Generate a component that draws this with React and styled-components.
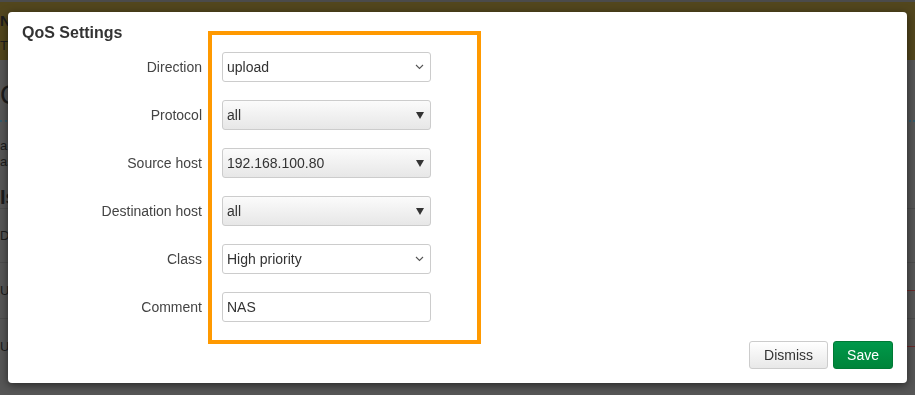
import React from 'react'
import styled, { createGlobalStyle } from 'styled-components'

const GlobalStyle = createGlobalStyle`
  html, body {
    margin: 0;
    padding: 0;
    background: #565656;
  }
  body {
    font-family: "Liberation Sans", Arial, sans-serif;
  }
`

// dimmed page behind the modal
const Page = styled.div`
  min-height: 395px;
  background: #565656;
  border-top: 2px solid #4b4b4b;
  color: #1c1c1c;
  overflow: hidden;
`
const Banner = styled.div`
  height: 58px;
  background: #52461d;
  padding: 11px 0 0 0;
  box-sizing: border-box;
`
const BannerTitle = styled.div`
  font-weight: bold;
  font-size: 15px;
  line-height: 16px;
`
const BannerText = styled.div`
  font-size: 13px;
  line-height: 14px;
  margin-top: 10px;
`
const PageHeading = styled.div`
  font-size: 28px;
  line-height: 30px;
  margin-top: 20px;
`
const Dotted = styled.div`
  border-top: 2px dotted #355a6a;
  margin-top: 10px;
`
const PageText = styled.div`
  font-size: 13px;
  line-height: 16px;
  margin-top: ${p => p.$top || 0}px;
`
const SubHeading = styled.div`
  font-size: 20px;
  font-weight: bold;
  line-height: 22px;
  margin-top: 16px;
`
const TableRow = styled.div`
  height: ${p => p.$h}px;
  border-top: 1px solid #4c4c4c;
  font-size: 13px;
  display: flex;
  align-items: center;
  justify-content: space-between;
`
const RedMark = styled.span`
  width: 8px;
  border-top: 1px solid #6a2a2a;
`

// modal
const Modal = styled.div`
  position: fixed;
  left: 8px;
  top: 12px;
  width: 899px;
  height: 371px;
  box-sizing: border-box;
  background: #fff;
  border-radius: 4px;
  box-shadow: 0 2px 8px rgba(0, 0, 0, 0.55);
  display: flex;
  flex-direction: column;
  color: #404040;
`
const Title = styled.h4`
  margin: 0;
  padding: 11px 14px 0;
  font-size: 16px;
  line-height: 20px;
  font-weight: bold;
  color: #333;
`
const Form = styled.div`
  display: grid;
  grid-template-columns: 194px 209px;
  column-gap: 20px;
  row-gap: 18px;
  align-items: center;
  margin-top: 9px;
`
const Label = styled.div`
  text-align: right;
  font-size: 14px;
  color: #444;
`
const Field = styled.div`
  height: 30px;
  box-sizing: border-box;
  border: 1px solid #ccc;
  border-radius: 3px;
  padding: 0 6px 0 4px;
  display: flex;
  align-items: center;
  justify-content: space-between;
  font-size: 14px;
  color: #333;
  background: ${p => (p.$shaded ? 'linear-gradient(#fbfbfb, #e7e7e7)' : '#fff')};
`
const Footer = styled.div`
  margin-top: auto;
  padding: 0 14px 14px;
  display: flex;
  justify-content: flex-end;
  gap: 5px;
`
const Button = styled.button`
  height: 28px;
  padding: 0 ${p => (p.$primary ? 13 : 14)}px;
  font-family: inherit;
  font-size: 14px;
  border-radius: 3px;
  border: 1px solid ${p => (p.$primary ? '#007a35' : '#ccc')};
  color: ${p => (p.$primary ? '#fff' : '#333')};
  background: ${p =>
    p.$primary ? 'linear-gradient(#00984a, #00843a)' : 'linear-gradient(#fff, #e8e8e8)'};
`
const Highlight = styled.div`
  position: absolute;
  left: 200px;
  top: 19px;
  width: 273px;
  height: 313px;
  box-sizing: border-box;
  border: 4px solid #ff9900;
  pointer-events: none;
`

const Chevron = () => (
  <svg width="9" height="6" viewBox="0 0 9 6">
    <polyline points="1,1 4.5,4.5 8,1" fill="none" stroke="#555" strokeWidth="1.1" />
  </svg>
)

const Caret = () => (
  <svg width="8" height="8" viewBox="0 0 8 8">
    <polygon points="0,1 8,1 4,8" fill="#333" />
  </svg>
)

const fields = [
  { label: 'Direction', value: 'upload', kind: 'chevron' },
  { label: 'Protocol', value: 'all', kind: 'caret' },
  { label: 'Source host', value: '192.168.100.80', kind: 'caret' },
  { label: 'Destination host', value: 'all', kind: 'caret' },
  { label: 'Class', value: 'High priority', kind: 'chevron' },
  { label: 'Comment', value: 'NAS', kind: 'text' },
]

function App() {
  return (
    <>
      <GlobalStyle />
      <Page>
        <Banner>
          <BannerTitle>N</BannerTitle>
          <BannerText>Th</BannerText>
        </Banner>
        <PageHeading>Q</PageHeading>
        <Dotted />
        <PageText $top={16}>a</PageText>
        <PageText>as</PageText>
        <SubHeading>Is</SubHeading>
        <TableRow $h={53}>D</TableRow>
        <TableRow $h={55}>
          <span>U</span>
          <RedMark />
        </TableRow>
        <TableRow $h={55}>
          <span>U</span>
          <RedMark />
        </TableRow>
      </Page>

      <Modal>
        <Title>QoS Settings</Title>
        <Form>
          {fields.map(f => (
            <React.Fragment key={f.label}>
              <Label>{f.label}</Label>
              <Field $shaded={f.kind === 'caret'}>
                <span>{f.value}</span>
                {f.kind === 'chevron' && <Chevron />}
                {f.kind === 'caret' && <Caret />}
              </Field>
            </React.Fragment>
          ))}
        </Form>
        <Footer>
          <Button>Dismiss</Button>
          <Button $primary>Save</Button>
        </Footer>
        <Highlight />
      </Modal>
    </>
  )
}

export default App
